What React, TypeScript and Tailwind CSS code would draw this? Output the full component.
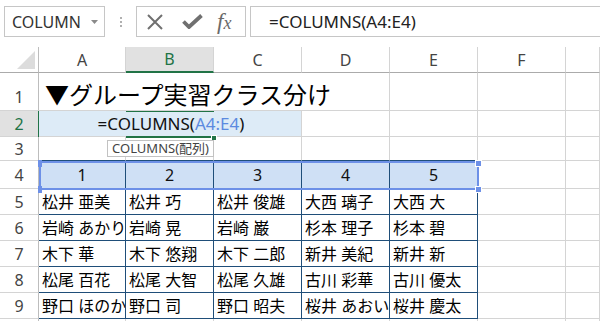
import React from 'react';

const COLS = ['A', 'B', 'C', 'D', 'E', 'F', 'G'];

const NAMES = [
  ['松井 亜美', '松井 巧', '松井 俊雄', '大西 璃子', '大西 大'],
  ['岩崎 あかり', '岩崎 晃', '岩崎 巌', '杉本 理子', '杉本 碧'],
  ['木下 華', '木下 悠翔', '木下 二郎', '新井 美紀', '新井 新'],
  ['松尾 百花', '松尾 大智', '松尾 久雄', '古川 彩華', '古川 優太'],
  ['野口 ほのか', '野口 司', '野口 昭夫', '桜井 あおい', '桜井 慶太'],
];

const font = "font-['Noto_Sans','Noto_Sans_CJK_JP',sans-serif]";

const RowHead = ({ n, active, bottom }: { n?: number; active?: boolean; bottom?: boolean }) => (
  <div
    className={`flex justify-center border-b border-[#d4d4d4] text-[16px] ${
      bottom ? 'items-end pb-[1px]' : 'items-center'
    } ${active ? 'bg-[#e1e1e1] text-[#217346] border-r border-r-[#217346]' : 'bg-white text-[#444] border-r border-r-[#bdbdbd]'}`}
  >
    {n}
  </div>
);

const Blank = ({ extra = '' }: { extra?: string }) => (
  <div className={`border-r border-b border-[#d4d4d4] ${extra}`} />
);

const Toolbar = () => (
  <div className={`h-[47px] flex items-start pt-[6px] ${font}`}>
    <div className="ml-[4px] w-[101px] h-[31px] border border-[#c6c6c6] flex items-center justify-between pl-[7px] pr-[6px]">
      <span className="text-[16px] text-[#333]">COLUMN</span>
      <svg width="7" height="4" viewBox="0 0 7 4">
        <path d="M0 0h7L3.5 4z" fill="#8a8a8a" />
      </svg>
    </div>
    <div className="w-[31px] h-[31px] flex flex-col items-center justify-center gap-[2px]">
      <span className="w-[2px] h-[2px] bg-[#b0b0b0]" />
      <span className="w-[2px] h-[2px] bg-[#b0b0b0]" />
      <span className="w-[2px] h-[2px] bg-[#b0b0b0]" />
    </div>
    <div className="w-[110px] h-[31px] border border-[#c6c6c6] flex items-center">
      <svg className="ml-[9px]" width="18" height="16" viewBox="0 0 18 16">
        <path d="M2 1l14 14M16 1L2 15" stroke="#707070" strokeWidth="2" />
      </svg>
      <svg className="ml-[18px]" width="21" height="15" viewBox="0 0 21 15">
        <path d="M1.5 7.5l5.5 5.5L19.5 1.5" stroke="#707070" strokeWidth="3.8" fill="none" />
      </svg>
      <span className="ml-[14px] text-[23px] italic text-[#6a6a6a] font-['Liberation_Serif',serif] leading-none">
        f<span className="text-[18px]">x</span>
      </span>
    </div>
    <div className="ml-[4px] flex-1 h-[31px] border border-r-0 border-[#c6c6c6] flex items-center pl-[18px]">
      <span className="text-[17px] text-[#222]">=COLUMNS(A4:E4)</span>
    </div>
  </div>
);

export default function App() {
  return (
    <div className={`relative w-[600px] h-[321px] overflow-hidden bg-white ${font}`}>
      <Toolbar />
      <div className="grid grid-cols-[39px_87px_88px_88px_88px_88px_88px_1fr] grid-rows-[26px_38px_26px_24px_28px_26px_26px_26px_26px_26px_26px]">
        {/* column headers */}
        <div className="relative border-r border-b border-r-[#bdbdbd] border-b-[#ababab] bg-white">
          <svg className="absolute right-[3px] bottom-[3px]" width="18" height="18" viewBox="0 0 18 18">
            <path d="M18 0V18H0z" fill="#dcdcdc" />
          </svg>
        </div>
        {COLS.map((c) =>
          c === 'B' ? (
            <div key={c} className="flex items-center justify-center bg-[#e1e1e1] border-r border-[#d4d4d4] border-b-2 border-b-[#217346] text-[16px] text-[#217346]">
              {c}
            </div>
          ) : (
            <div key={c} className="flex items-center justify-center bg-white border-r border-b border-r-[#d4d4d4] border-b-[#ababab] text-[16px] text-[#444]">
              {c === 'G' ? '' : c}
            </div>
          )
        )}

        {/* row 1 */}
        <RowHead n={1} bottom />
        <div className="col-span-3 border-b border-[#d4d4d4] flex items-end pl-[6px] pb-[3px] text-[24px] leading-none text-black whitespace-nowrap overflow-visible z-10">
          ▼グループ実習クラス分け
        </div>
        <Blank />
        <Blank />
        <Blank />
        <Blank />

        {/* row 2 */}
        <RowHead n={2} active />
        <div className="col-span-3 bg-[#ddebf7] border-r border-b border-[#d4d4d4] flex items-center justify-center text-[17px] text-[#111] pl-[2px]">
          =COLUMNS(<span className="text-[#5b8ae0]">A4:E4</span>)
        </div>
        <Blank />
        <Blank />
        <Blank />
        <Blank />

        {/* row 3 */}
        <RowHead n={3} />
        <Blank extra="border-b-[#1f4e79]" />
        <Blank extra="border-b-[#1f4e79]" />
        <Blank extra="border-b-[#1f4e79]" />
        <Blank extra="border-b-[#1f4e79]" />
        <Blank extra="border-b-[#1f4e79]" />
        <Blank />
        <Blank />

        {/* row 4 */}
        <RowHead n={4} />
        {[1, 2, 3, 4, 5].map((n) => (
          <div key={n} className="bg-[#cfe0f5] border-r border-b border-[#1f4e79] flex items-center justify-center text-[16px] text-[#111]">
            {n}
          </div>
        ))}
        <Blank />
        <Blank />

        {/* rows 5-9 */}
        {NAMES.map((row, i) => (
          <React.Fragment key={i}>
            <RowHead n={i + 5} />
            {row.map((name, j) => (
              <div key={j} className="border-r border-b border-[#1f4e79] flex items-center pl-[3px] text-[16px] text-black whitespace-nowrap overflow-hidden">
                {name}
              </div>
            ))}
            <Blank />
            <Blank />
          </React.Fragment>
        ))}

        {/* row 10, only its top edge shows */}
        <RowHead />
        <Blank />
        <Blank />
        <Blank />
        <Blank />
        <Blank />
        <Blank />
        <Blank />
      </div>

      {/* active cell edit border */}
      <div className="absolute left-[126px] top-[110px] w-[88px] h-[28px] border-y-2 border-[#217346] pointer-events-none" />
      <div className="absolute left-[38px] top-[111px] w-[1px] h-[26px] bg-[#217346]" />
      <div className="absolute left-[211px] top-[135px] w-[6px] h-[6px] bg-[#217346] border border-white" />

      {/* function tooltip */}
      <div className="absolute left-[107px] top-[140px] w-[107px] h-[17px] bg-white border border-[#c2c2c2] flex items-center justify-center text-[13px] leading-none text-[#444]">
        COLUMNS(配列)
      </div>

      {/* range reference highlight */}
      <div className="absolute left-[39px] top-[161px] w-[440px] h-[29px] border-2 border-[#6d90e7] pointer-events-none" />
      <div className="absolute left-[475px] top-[160px] w-[7px] h-[7px] bg-[#6d90e7] border border-white" />
      <div className="absolute left-[475px] top-[186px] w-[7px] h-[7px] bg-[#6d90e7] border border-white" />
      <div className="absolute left-[38px] top-[160px] w-[4px] h-[7px] bg-[#6d90e7]" />
      <div className="absolute left-[38px] top-[186px] w-[4px] h-[7px] bg-[#6d90e7]" />
    </div>
  );
}
